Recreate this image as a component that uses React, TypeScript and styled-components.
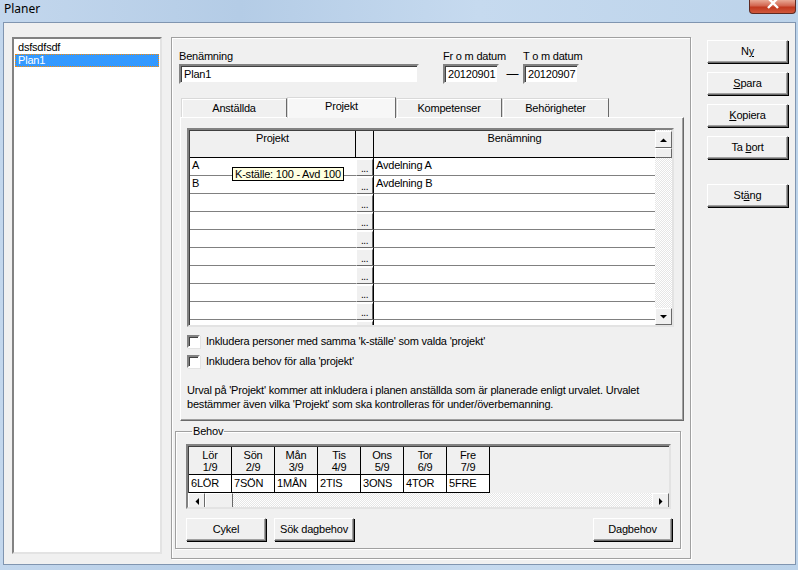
import styled, { createGlobalStyle } from 'styled-components';

const GlobalStyle = createGlobalStyle`
  html, body {
    margin: 0;
    padding: 0;
  }
  body {
    font-family: 'Liberation Sans', Arial, sans-serif;
    font-size: 11px;
    letter-spacing: -0.2px;
    color: #000;
  }
`;

const Window = styled.div`
  width: 798px;
  height: 570px;
  overflow: hidden;
  display: flex;
  flex-direction: column;
  background: linear-gradient(90deg, #c3d7ed 0%, #b4cce6 30%, #c6daef 60%, #bcd3ea 100%);
`;

const TitleBar = styled.div`
  height: 22px;
  flex-shrink: 0;
  display: flex;
  align-items: flex-start;
  padding-left: 4px;
`;

const Title = styled.div`
  font-family: 'Noto Sans', 'Open Sans', sans-serif;
  font-size: 12px;
  letter-spacing: 0;
  line-height: 14px;
  margin-top: 2px;
`;

const CloseButton = styled.div`
  margin-left: auto;
  margin-right: 2px;
  width: 45px;
  height: 13px;
  border: 1px solid #5e2a22;
  border-top: none;
  border-radius: 0 0 4px 4px;
  background: linear-gradient(180deg, #e9a995 0%, #d2654f 45%, #c1391f 55%, #d0583c 100%);
  display: flex;
  justify-content: center;
  align-items: flex-start;
`;

const Client = styled.div`
  flex: 1;
  margin: 0 2px 5px 3px;
  background: #f0f0f0;
  border: 1px solid #8095b0;
  display: flex;
  align-items: flex-start;
  padding: 14px 0 0 8px;
`;

const ListBox = styled.div`
  width: 144px;
  height: 510px;
  flex-shrink: 0;
  background: #fff;
  border: 2px solid;
  border-color: #828282 #e3e3e3 #e3e3e3 #828282;
  padding: 2px 1px 1px;
`;

const ListItem = styled.div<{ $selected?: boolean }>`
  height: 13px;
  line-height: 13px;
  padding-left: 3px;
  white-space: nowrap;
  background: ${(p) => (p.$selected ? '#3399ff' : 'transparent')};
  color: ${(p) => (p.$selected ? '#fff' : '#000')};
  outline: ${(p) => (p.$selected ? '1px dotted #ff8c00' : 'none')};
  outline-offset: -1px;
`;

const MainPanel = styled.div`
  margin-left: 9px;
  width: 511px;
  height: 508px;
  flex-shrink: 0;
  border: 1px solid #a0a0a0;
  box-shadow: inset 1px 1px 0 #fff, 1px 1px 0 #fff;
  padding: 12px 0 0 7px;
  display: flex;
  flex-direction: column;
`;

const FormRow = styled.div`
  display: flex;
  align-items: flex-start;
`;

const Field = styled.div<{ $width: number }>`
  width: ${(p) => p.$width}px;
  display: flex;
  flex-direction: column;
`;

const Label = styled.div`
  height: 13px;
  line-height: 13px;
  margin-bottom: 1px;
  white-space: nowrap;
`;

const TextInput = styled.div`
  height: 16px;
  line-height: 16px;
  background: #fff;
  border: 2px solid;
  border-color: #828282 #f0f0f0 #f0f0f0 #828282;
  box-shadow: inset 1px 1px 0 #404040;
  padding-left: 3px;
  white-space: nowrap;
  overflow: hidden;
`;

const DateGroup = styled.div`
  margin-left: 24px;
  display: grid;
  grid-template-columns: 56px 24px 56px;
  align-items: center;
`;

const Dash = styled.div`
  text-align: center;
  font-size: 12px;
  padding-left: 3px;
`;

const TabRow = styled.div`
  margin-top: 12px;
  margin-left: 2px;
  height: 21px;
  display: flex;
  align-items: flex-end;
`;

const Tab = styled.div<{ $width: number; $active?: boolean }>`
  width: ${(p) => p.$width}px;
  height: ${(p) => (p.$active ? 21 : 19)}px;
  box-sizing: border-box;
  background: ${(p) => (p.$active ? '#f7f7f7' : '#f0f0f0')};
  border: 1px solid #d9d9d9;
  border-bottom: none;
  border-right: 1px solid #696969;
  box-shadow: inset 1px 1px 0 #fff;
  text-align: center;
  line-height: ${(p) => (p.$active ? 17 : 19)}px;
  margin-bottom: ${(p) => (p.$active ? '-1px' : '0')};
  position: relative;
  z-index: ${(p) => (p.$active ? 1 : 0)};
`;

const TabPanel = styled.div`
  margin-left: 1px;
  width: 496px;
  height: 292px;
  border: 1px solid;
  border-color: #fff #696969 #696969 #fff;
  box-shadow: inset -1px -1px 0 #a0a0a0;
  padding: 10px 0 0 6px;
  display: flex;
  flex-direction: column;
`;

const SunkenGrid = styled.div<{ $width: number; $height: number; $bg?: string }>`
  width: ${(p) => p.$width - 4}px;
  height: ${(p) => p.$height - 4}px;
  flex-shrink: 0;
  border: 2px solid;
  border-color: #828282 #e3e3e3 #e3e3e3 #828282;
  box-shadow: inset 1px 1px 0 #404040;
  background: ${(p) => p.$bg || '#fff'};
  display: flex;
  overflow: hidden;
  position: relative;
`;

const ProjectTable = styled.div`
  flex: 1;
  display: grid;
  grid-template-columns: 166px 18px 1fr;
  grid-auto-rows: 18px;
  grid-template-rows: 27px;
  padding-left: 1px;
  padding-top: 1px;
`;

const HeaderCell = styled.div<{ $last?: boolean }>`
  background: #f0f0f0;
  border-right: ${(p) => (p.$last ? 'none' : '1px solid #000')};
  border-bottom: 1px solid #000;
  text-align: center;
  padding-top: 1px;
  line-height: 13px;
`;

const Cell = styled.div`
  background: #fff;
  border-bottom: 1px solid #808080;
  line-height: 15px;
  padding-left: 2px;
  white-space: nowrap;
  overflow: hidden;
`;

const EllipsisCell = styled.div`
  border-right: 1px solid #000;
  border-bottom: 1px solid #808080;
  background: #fff;
  padding-top: 1px;
  display: flex;
`;

const EllipsisButton = styled.div`
  flex: 1;
  height: 15px;
  background: #f0f0f0;
  border: 1px solid;
  border-color: #fff #696969 #696969 #fff;
  font-size: 10px;
  line-height: 18px;
  text-align: center;
  letter-spacing: -0.5px;
`;

const Tooltip = styled.div`
  position: absolute;
  left: 43px;
  top: 37px;
  background: #ffffe1;
  border: 1px solid #000;
  padding: 0 2px;
  line-height: 12px;
  white-space: nowrap;
`;

const VScroll = styled.div`
  width: 17px;
  display: flex;
  flex-direction: column;
  background: repeating-conic-gradient(#ffffff 0 25%, #e6e6e6 0 50%) 0 0 / 2px 2px;
  padding-top: 1px;
`;

const HScroll = styled.div`
  height: 17px;
  display: flex;
  background: repeating-conic-gradient(#ffffff 0 25%, #e6e6e6 0 50%) 0 0 / 2px 2px;
`;

const ScrollButton = styled.div<{ $w?: number; $h?: number }>`
  width: ${(p) => (p.$w ?? 17) - 2}px;
  height: ${(p) => (p.$h ?? 17) - 2}px;
  background: #f0f0f0;
  border: 1px solid;
  border-color: #fff #696969 #696969 #fff;
  display: flex;
  align-items: center;
  justify-content: center;
  flex-shrink: 0;
`;

const ScrollSpacer = styled.div`
  flex: 1;
`;

const Arrow = ({ dir }: { dir: 'up' | 'down' | 'left' | 'right' }) => {
  const pts = {
    up: '0,4 7,4 3.5,0.5',
    down: '0,0 7,0 3.5,3.5',
    left: '4,0 4,7 0.5,3.5',
    right: '0,0 0,7 3.5,3.5',
  }[dir];
  const horiz = dir === 'left' || dir === 'right';
  return (
    <svg width={horiz ? 4 : 7} height={horiz ? 7 : 4} viewBox={horiz ? '0 0 4 7' : '0 0 7 4'}>
      <polygon points={pts} fill="#000" />
    </svg>
  );
};

const CheckList = styled.div`
  margin-top: 4px;
  display: flex;
  flex-direction: column;
`;

const CheckRow = styled.label`
  height: 20px;
  display: flex;
  align-items: center;
  gap: 6px;
`;

const CheckBox = styled.span`
  width: 9px;
  height: 9px;
  background: #fff;
  border: 2px solid;
  border-color: #828282 #fff #fff #828282;
  box-shadow: inset 1px 1px 0 #404040, 1px 1px 0 #e3e3e3;
`;

const Paragraph = styled.p`
  margin: 12px 0 0;
  line-height: 14px;
`;

const GroupBox = styled.fieldset`
  margin: 4px 0 0 -4px;
  width: 487px;
  border: 1px solid #a0a0a0;
  box-shadow: inset 1px 1px 0 #fff, 1px 1px 0 #fff;
  padding: 6px 7px 6px 10px;
  display: flex;
  flex-direction: column;
`;

const Legend = styled.legend`
  padding: 0 1px;
  margin-left: 6px;
  line-height: 13px;
`;

const DayTable = styled.div`
  flex: 1;
  display: flex;
  flex-direction: column;
`;

const DayGrid = styled.div`
  display: grid;
  grid-template-columns: repeat(7, 43px);
  grid-template-rows: 28px 18px;
  padding-left: 1px;
  padding-top: 1px;
  flex: 1;
`;

const DayHead = styled.div`
  border-right: 1px solid #000;
  border-bottom: 1px solid #000;
  text-align: center;
  line-height: 12px;
  padding-top: 2px;
`;

const DayCell = styled.div`
  background: #fff;
  border-right: 1px solid #000;
  border-bottom: 1px solid #000;
  line-height: 17px;
  padding-left: 2px;
`;

const ButtonRow = styled.div`
  margin-top: 9px;
  display: flex;
  gap: 7px;
`;

const PushButton = styled.div<{ $width?: number; $push?: boolean }>`
  width: ${(p) => (p.$width ?? 82) - 3}px;
  height: 21px;
  background: #f0f0f0;
  border: 1px solid;
  border-color: #fff #696969 #696969 #fff;
  box-shadow: 1px 1px 0 #000, inset -1px -1px 0 #a0a0a0;
  margin-right: 1px;
  margin-bottom: 1px;
  margin-left: ${(p) => (p.$push ? 'auto' : '0')};
  text-align: center;
  line-height: 21px;
  white-space: nowrap;
`;

const SideButtons = styled.div`
  margin-left: 16px;
  padding-top: 3px;
  display: flex;
  flex-direction: column;
  gap: 8px;
`;

const Separator = styled.div`
  height: 8px;
`;

const projects = [
  { code: 'A', name: 'Avdelning A' },
  { code: 'B', name: 'Avdelning B' },
  ...Array.from({ length: 8 }, () => ({ code: '', name: '' })),
];

const days = [
  ['Lör', '1/9', '6LÖR'],
  ['Sön', '2/9', '7SÖN'],
  ['Mån', '3/9', '1MÅN'],
  ['Tis', '4/9', '2TIS'],
  ['Ons', '5/9', '3ONS'],
  ['Tor', '6/9', '4TOR'],
  ['Fre', '7/9', '5FRE'],
];

const App = () => {
  return (
    <Window>
      <GlobalStyle />
      <TitleBar>
        <Title>Planer</Title>
        <CloseButton>
          <svg width="12" height="9" viewBox="0 0 12 9">
            <path d="M1 -2 L11 8 M11 -2 L1 8" stroke="#fff" strokeWidth="2.4" />
          </svg>
        </CloseButton>
      </TitleBar>
      <Client>
        <ListBox>
          <ListItem>dsfsdfsdf</ListItem>
          <ListItem $selected>Plan1</ListItem>
        </ListBox>

        <MainPanel>
          <FormRow>
            <Field $width={240}>
              <Label>Benämning</Label>
              <TextInput>Plan1</TextInput>
            </Field>
            <DateGroup>
              <Label>Fr o m datum</Label>
              <span />
              <Label>T o m datum</Label>
              <TextInput>20120901</TextInput>
              <Dash>—</Dash>
              <TextInput>20120907</TextInput>
            </DateGroup>
          </FormRow>

          <TabRow>
            <Tab $width={106}>Anställda</Tab>
            <Tab $width={109} $active>
              Projekt
            </Tab>
            <Tab $width={106}>Kompetenser</Tab>
            <Tab $width={107}>Behörigheter</Tab>
          </TabRow>
          <TabPanel>
            <SunkenGrid $width={487} $height={199} $bg="#fff">
              <ProjectTable>
                <HeaderCell>Projekt</HeaderCell>
                <HeaderCell />
                <HeaderCell $last>Benämning</HeaderCell>
                {projects.map((p, i) => [
                  <Cell key={`c${i}`}>{p.code}</Cell>,
                  <EllipsisCell key={`e${i}`}>
                    <EllipsisButton>{i < projects.length - 1 ? '...' : ''}</EllipsisButton>
                  </EllipsisCell>,
                  <Cell key={`n${i}`}>{p.name}</Cell>,
                ])}
              </ProjectTable>
              <VScroll>
                <ScrollButton>
                  <Arrow dir="up" />
                </ScrollButton>
                <ScrollButton $h={10} />
                <ScrollSpacer />
                <ScrollButton>
                  <Arrow dir="down" />
                </ScrollButton>
              </VScroll>
              <Tooltip>K-ställe: 100 - Avd 100</Tooltip>
            </SunkenGrid>

            <CheckList>
              <CheckRow>
                <CheckBox />
                Inkludera personer med samma 'k-ställe' som valda 'projekt'
              </CheckRow>
              <CheckRow>
                <CheckBox />
                Inkludera behov för alla 'projekt'
              </CheckRow>
            </CheckList>
            <Paragraph>
              Urval på 'Projekt' kommer att inkludera i planen anställda som är planerade enligt urvalet. Urvalet
              <br />
              bestämmer även vilka 'Projekt' som ska kontrolleras för under/överbemanning.
            </Paragraph>
          </TabPanel>

          <GroupBox>
            <Legend>Behov</Legend>
            <SunkenGrid $width={485} $height={65} $bg="#f0f0f0">
              <DayTable>
                <DayGrid>
                  {days.map(([d, date]) => (
                    <DayHead key={d}>
                      {d}
                      <br />
                      {date}
                    </DayHead>
                  ))}
                  {days.map(([d, , code]) => (
                    <DayCell key={code + d}>{code}</DayCell>
                  ))}
                </DayGrid>
                <HScroll>
                  <ScrollButton>
                    <Arrow dir="left" />
                  </ScrollButton>
                  <ScrollButton $w={28} />
                  <ScrollSpacer />
                  <ScrollButton>
                    <Arrow dir="right" />
                  </ScrollButton>
                </HScroll>
              </DayTable>
            </SunkenGrid>
            <ButtonRow>
              <PushButton $width={81}>Cykel</PushButton>
              <PushButton $width={81}>Sök dagbehov</PushButton>
              <PushButton $width={80} $push>
                Dagbehov
              </PushButton>
            </ButtonRow>
          </GroupBox>
        </MainPanel>

        <SideButtons>
          <PushButton>
            N<u>y</u>
          </PushButton>
          <PushButton>
            <u>S</u>para
          </PushButton>
          <PushButton>
            <u>K</u>opiera
          </PushButton>
          <PushButton>
            Ta <u>b</u>ort
          </PushButton>
          <Separator />
          <PushButton>
            St<u>ä</u>ng
          </PushButton>
        </SideButtons>
      </Client>
    </Window>
  );
};

export default App;
